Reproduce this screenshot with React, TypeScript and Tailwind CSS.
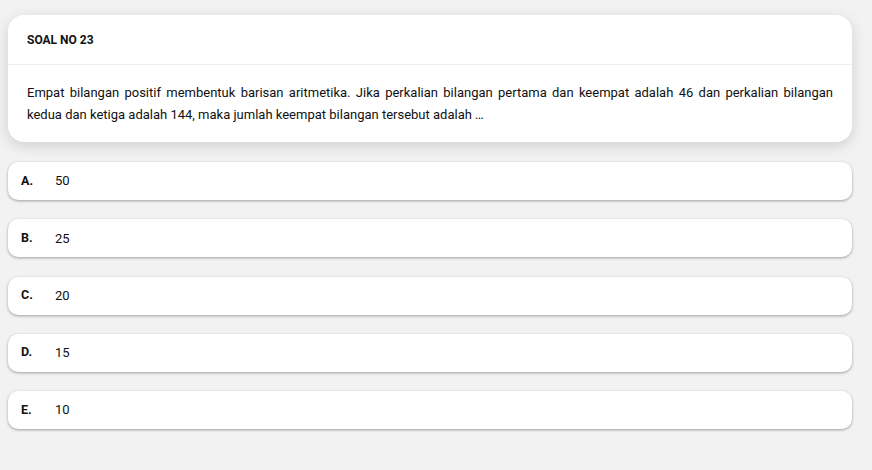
const options = [
  { label: "A.", value: "50" },
  { label: "B.", value: "25" },
  { label: "C.", value: "20" },
  { label: "D.", value: "15" },
  { label: "E.", value: "10" },
];

export default function App() {
  return (
    <div
      className="min-h-[470px] bg-[#f2f2f2] pl-2 pr-5 pt-[15px] pb-10 text-[#111]"
      style={{ fontFamily: "Roboto, 'Liberation Sans', sans-serif" }}
    >
      <div className="rounded-2xl bg-white shadow-[0_4px_14px_rgba(0,0,0,0.14)]">
        <div className="flex h-[50px] items-center border-b border-[#eeeeee] px-[19px]">
          <h2 className="text-[12px] font-bold">SOAL NO 23</h2>
        </div>
        <p className="px-[19px] pt-[17px] pb-[16px] text-justify text-[13px] leading-[22px]">
          Empat bilangan positif membentuk barisan aritmetika. Jika perkalian
          bilangan pertama dan keempat adalah 46 dan perkalian bilangan kedua
          dan ketiga adalah 144, maka jumlah keempat bilangan tersebut adalah
          …
        </p>
      </div>

      <div className="mt-5 flex flex-col gap-[19.25px]">
        {options.map((opt) => (
          <div
            key={opt.label}
            className="flex h-[38px] items-center rounded-[10px] bg-white pl-[13px] pr-4 shadow-[0_1px_3px_rgba(0,0,0,0.35)]"
          >
            <span className="w-[34px] text-[12.5px] font-bold">{opt.label}</span>
            <span className="text-[13px]">{opt.value}</span>
          </div>
        ))}
      </div>
    </div>
  );
}
